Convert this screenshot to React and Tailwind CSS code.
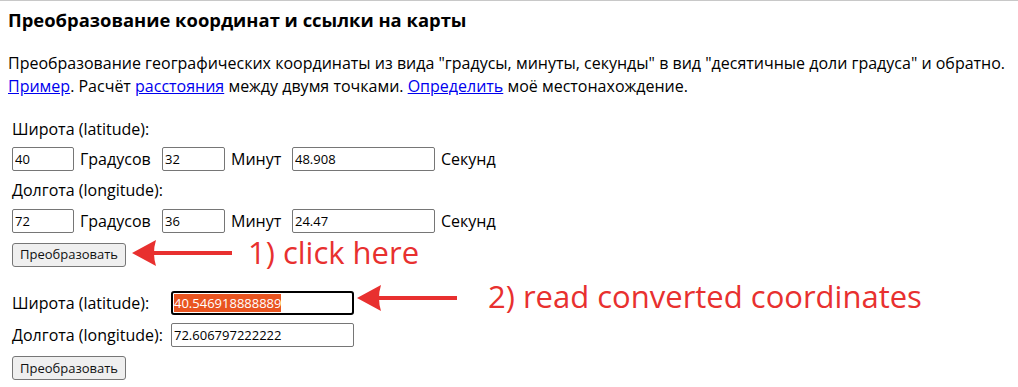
import React from 'react';

function Arrow({ className }) {
  // left-pointing arrow: head + shaft
  return (
    <svg className={className} width="100" height="30" viewBox="0 0 100 30" fill="none">
      <rect x="20" y="13" width="80" height="4" fill="#e8302f" />
      <path d="M0 15 L24 2 Q20 15 24 28 Z" fill="#e8302f" />
    </svg>
  );
}

const inputCls =
  'h-6 border border-[#767676] rounded-[2px] px-[2px] text-[13px] text-black bg-white outline-none';

const btnCls =
  'h-6 px-[7px] border border-[#767676] rounded-[3px] bg-[#efefef] text-[13px] text-[#111] leading-none';

function DmsRow({ deg, min, sec }) {
  return (
    <div className="flex items-center">
      <input className={`${inputCls} w-[62px]`} defaultValue={deg} readOnly />
      <span className="ml-[6px] w-[82px]">Градусов</span>
      <input className={`${inputCls} w-[63px]`} defaultValue={min} readOnly />
      <span className="ml-[6px] w-[61px]">Минут</span>
      <input className={`${inputCls} w-[143px]`} defaultValue={sec} readOnly />
      <span className="ml-[6px]">Секунд</span>
    </div>
  );
}

export default function App() {
  return (
    <div className="relative w-[1018px] h-[387px] overflow-hidden bg-white border-t border-[#c8c8c8] font-['Open_Sans',sans-serif] text-black">
      <div className="pt-[6px] px-2">
        <h3 className="text-[18.4px] font-bold leading-[26px]">Преобразование координат и ссылки на карты</h3>
        <p className="mt-[19px] text-[16px] leading-[23px] whitespace-nowrap">
          Преобразование географических координаты из вида "градусы, минуты, секунды" в вид "десятичные доли градуса" и обратно.
          <br />
          <a href="#" className="text-[#0000ee] underline">Пример</a>. Расчёт{' '}
          <a href="#" className="text-[#0000ee] underline">расстояния</a> между двумя точками.{' '}
          <a href="#" className="text-[#0000ee] underline">Определить</a> моё местонахождение.
        </p>
      </div>

      <div className="px-3 text-[16px]">
        <div className="mt-[20px] leading-[23px]">Широта (latitude):</div>
        <div className="mt-[6px]">
          <DmsRow deg="40" min="32" sec="48.908" />
        </div>
        <div className="mt-[8px] leading-[23px]">Долгота (longitude):</div>
        <div className="mt-[7px]">
          <DmsRow deg="72" min="36" sec="24.47" />
        </div>
        <div className="mt-[8px]">
          <button className={btnCls}>Преобразовать</button>
        </div>

        <div className="mt-[24px] flex items-center">
          <span className="w-[159px]">Широта (latitude):</span>
          <div className="h-6 w-[183px] border-2 border-black rounded-[3px] px-[1px] flex items-center text-[13px]">
            <span className="bg-[#e95420] text-white leading-[18px]">40.546918888889</span>
          </div>
        </div>
        <div className="mt-[8px] flex items-center">
          <span className="w-[159px]">Долгота (longitude):</span>
          <input className={`${inputCls} w-[183px]`} defaultValue="72.606797222222" readOnly />
        </div>
        <div className="mt-[8px]">
          <button className={btnCls}>Преобразовать</button>
        </div>
      </div>

      <Arrow className="absolute left-[132px] top-[237px]" />
      <span className="absolute left-[248px] top-[231px] text-[31px] leading-[40px] text-[#e8302f] whitespace-nowrap">
        1) click here
      </span>
      <Arrow className="absolute left-[357px] top-[282px]" />
      <span className="absolute left-[488px] top-[275px] text-[31px] leading-[40px] text-[#e8302f] whitespace-nowrap">
        2) read converted coordinates
      </span>
    </div>
  );
}
